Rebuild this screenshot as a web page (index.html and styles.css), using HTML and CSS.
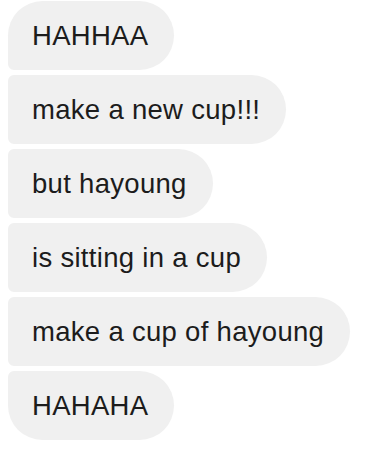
FILE: index.html
```html
<!DOCTYPE html>
<html>
<head>
  <link rel="stylesheet" href="styles.css">
</head>
<body>
  <div class="thread">
    <div class="bubble first">HAHHAA</div>
    <div class="bubble">make a new cup!!!</div>
    <div class="bubble">but hayoung</div>
    <div class="bubble">is sitting in a cup</div>
    <div class="bubble">make a cup of hayoung</div>
    <div class="bubble last">HAHAHA</div>
  </div>
</body>
</html>
```

FILE: styles.css
```css
body {
  margin: 0;
  padding: 0;
  background: #ffffff;
  font-family: "Liberation Sans", Arial, sans-serif;
}

.thread {
  display: flex;
  flex-direction: column;
  align-items: flex-start;
  gap: 5px;
  padding: 1px 8px 0;
}

.bubble {
  height: 69px;
  box-sizing: border-box;
  display: flex;
  align-items: center;
  padding: 0 26px 0 24px;
  background: #f0f0f0;
  color: #1c1c1c;
  font-size: 27.5px;
  letter-spacing: 0.3px;
  border-radius: 6px 35px 35px 6px;
  white-space: nowrap;
}

.bubble.first {
  border-top-left-radius: 35px;
}

.bubble.last {
  border-bottom-left-radius: 35px;
}
```
